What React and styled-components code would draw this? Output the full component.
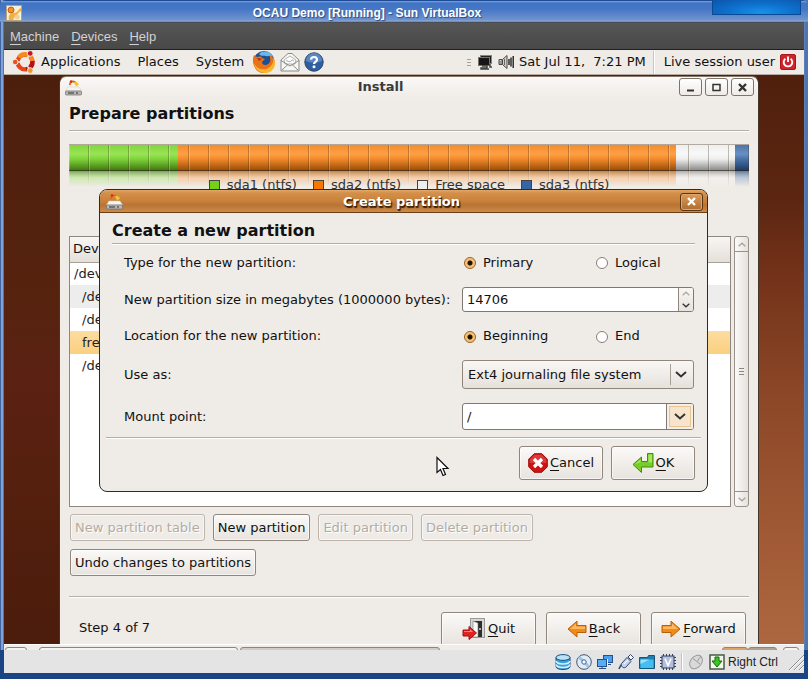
import React from 'react';
import styled, { createGlobalStyle, css } from 'styled-components';

const Global = createGlobalStyle`
  *, *::before, *::after { box-sizing: border-box; }
  body { margin: 0; background: #1b4484; }
  body, button, input, select { font: 13px/16px "DejaVu Sans", sans-serif; color: #111; }
  u { text-decoration: underline; text-decoration-thickness: 1px; text-underline-offset: 3px; }
`;

/* ---------- host window ---------- */

const HostWindow = styled.div`
  position: relative;
  min-height: 100vh;
  display: flex;
  flex-direction: column;
  padding: 0 4px;
  background: linear-gradient(90deg, #41659f 0, #41659f 1px, #7fa2da 1px, #7fa2da 3px, #55779f 3px, #55779f 4px, #5b80ba 4px, #5b80ba calc(100% - 3px), #5274ac calc(100% - 3px));
`;

const HostTitle = styled.header`
  height: 22px;
  margin: 0 -4px;
  padding: 4px 6px 0;
  display: grid;
  grid-template-columns: 72px 1fr 146px;
  align-items: center;
  background: linear-gradient(#1d4b96 0, #1d4b96 1px, #7ea3df 1px, #4274c4 3px, #4577c6 9px, #6f93ce 20px, #8fabdb 21px, #56749f 22px);
  border-radius: 6px 6px 0 0;
`;

const HostName = styled.h1`
  margin: 0;
  font: bold 12px/16px "Liberation Sans", sans-serif;
  color: #fff;
  text-align: center;
  white-space: nowrap;
  text-shadow: 1px 1px 1px #2a4a80;
`;

const CornerGlow = styled.div`
  position: absolute;
  top: 0;
  right: 7px;
  width: 89px;
  height: 15px;
  background: radial-gradient(ellipse at 55% 90%, #1893ea 0, #0e72cf 45%, #0b55ab 100%);
  border: solid #0a4a94;
  border-width: 0 1px 1px;
`;

const HostMenu = styled.nav`
  height: 28px;
  padding: 2px 6px 0;
  display: flex;
  gap: 12px;
  align-items: center;
  background: linear-gradient(#3f4650 0, #565656 1px, #484848 27px, #202020 27px);
  a {
    font: 13px/16px "Liberation Sans", sans-serif;
    color: #d2d2d2;
    text-decoration: none;
  }
`;

const StatusBar = styled.footer`
  height: 29px;
  margin: 0 -4px;
  padding: 0 4px;
  background: #1b4484;
`;

const StatusTray = styled.div`
  height: 23px;
  display: flex;
  align-items: center;
  justify-content: flex-end;
  gap: 5px;
  background: #e4e4e4;
  svg { flex: none; }
`;

const TrayDivider = styled.span`
  width: 2px;
  height: 18px;
  border-left: 1px solid #c4c4c4;
  border-right: 1px solid #fff;
`;

const HostKey = styled.span`
  display: flex;
  align-items: center;
  gap: 3px;
  padding-right: 5px;
  font: 12px/16px "Liberation Sans", sans-serif;
  color: #222;
`;

/* ---------- guest panels ---------- */

const Panel = styled.div`
  height: 25px;
  padding: 0 8px;
  display: flex;
  align-items: center;
  background: #efebe7;
  border-bottom: 1px solid #b7aca3;
  white-space: pre;
`;

const PanelMenus = styled.nav`
  display: flex;
  align-items: center;
  gap: 17px;
  margin: 0 8px 0 5px;
  a { color: #111; text-decoration: none; }
`;

const Launchers = styled.div`
  display: flex;
  align-items: center;
  gap: 4px;
`;

const PlainButton = styled.button`
  padding: 0;
  border: 0;
  background: none;
  display: flex;
`;

const Indicators = styled.div`
  margin-left: auto;
  display: flex;
  align-items: center;
  gap: 5px;
`;

const PanelDivider = styled.span`
  width: 2px;
  height: 23px;
  margin: 0 4px 0 2px;
  border-left: 1px solid #cdc6bf;
  border-right: 1px solid #fff;
`;

const BottomPanel = styled.div`
  height: 6px;
  padding: 2px 5px 0 1px;
  display: flex;
  overflow: hidden;
  background: #f0ece8;
  border-top: 1px solid #fff;
`;

const TaskEdge = styled.span`
  flex: 0 1 ${p => p.$w}px;
  height: 10px;
  margin-right: ${p => p.$gap || 0}px;
  border: 1px solid #8d857c;
  border-radius: 3px;
  background: ${p => p.$fill || '#f6f4f2'};
`;

const Spacer = styled.span`
  flex: 1;
`;

const Desktop = styled.main`
  flex: 1;
  display: flex;
  padding: 1px 45px 0 55px;
  background:
    linear-gradient(#50200d 0, #5b2611 22%, #6f2f17 32%, #8a4626 55%, #9c5531 75%, #ad6740 100%) right / 50% 100% no-repeat,
    linear-gradient(#4c1f0d 0, #56230f 40%, #5b2113 54%, #55200e 72%, #4b1c0c 100%);
`;

/* ---------- installer window ---------- */

const Installer = styled.section`
  position: relative;
  flex: 1;
  display: flex;
  flex-direction: column;
  background: linear-gradient(#fbfaf9 0, #f3f0ed 12px, #efebe7 26px);
  border: 1px solid #46352c;
  border-color: #8b7768 #46352c #46352c #46352c;
  border-bottom: 0;
  border-radius: 7px 7px 0 0;
`;

const WindowBar = styled.header`
  height: 20px;
  padding: 0 4px 0 5px;
  display: flex;
  align-items: center;
  gap: 3px;
`;

const WindowTitle = styled.h2`
  flex: 1;
  margin: 0;
  font-size: 13px;
  line-height: 16px;
  text-align: center;
  color: #3a3a3a;
`;

const WindowButton = styled.button`
  width: 23px;
  height: 18px;
  padding: 0;
  display: grid;
  place-items: center;
  border: 1px solid #7c756e;
  border-radius: 3px;
  background: linear-gradient(#fff, #efebe7);
`;

const Heading = styled.h3`
  margin: 0;
  font-size: 16px;
  line-height: 20px;
`;

const Rule = styled.hr`
  width: auto;
  height: 2px;
  margin: ${p => p.$m || '0'};
  border: 0;
  border-top: 1px solid #b5aea8;
  border-bottom: 1px solid #fff;
`;

const Page = styled.div`
  flex: 1;
  display: flex;
  flex-direction: column;
  padding: 7px 9px 0;
`;

const DiskBar = styled.div`
  position: relative;
  display: flex;
  height: 42px;
  margin-top: 12px;
  &::after {
    content: '';
    position: absolute;
    inset: 0;
    background:
      linear-gradient(transparent 0, transparent 25px, rgba(40, 30, 20, .55) 25px, rgba(40, 30, 20, .55) 26px, rgba(239, 235, 231, .35) 26px, #efebe7 42px),
      repeating-linear-gradient(90deg, rgba(255, 255, 255, .25) 0, rgba(255, 255, 255, .25) 1px, transparent 1px, transparent 19px, rgba(60, 40, 20, .3) 19px, rgba(60, 40, 20, .3) 20px);
    border-top: 1px solid rgba(70, 50, 30, .35);
  }
`;

const Segment = styled.span`
  flex: ${p => p.$size} 1 0;
  background: linear-gradient(${p => p.$stops[0]} 0, ${p => p.$stops[1]} 10px, ${p => p.$stops[0]} 15px, ${p => p.$stops[2]} 26px, ${p => p.$stops[2]} 27px, ${p => p.$stops[1]} 34px);
`;

const Legend = styled.ul`
  display: flex;
  justify-content: center;
  gap: 16px;
  height: 16px;
  margin: -9px 0 0;
  padding: 0;
  list-style: none;
  white-space: nowrap;
  li { position: relative; z-index: 1; display: flex; align-items: center; gap: 7px; color: #333; }
`;

const Swatch = styled.span`
  width: 11px;
  height: 11px;
  border: 1px solid #444;
  background: ${p => p.$color};
`;

const ListArea = styled.div`
  flex: 1;
  display: flex;
  gap: 3px;
  min-height: 271px;
  margin-top: 43px;
`;

const ListFrame = styled.div`
  flex: 1;
  border: 1px solid #8f877f;
  background: #fff;
`;

const PartitionTable = styled.table`
  width: 100%;
  border-collapse: collapse;
  text-align: left;
  th {
    height: 25px;
    padding: 0 3px;
    font-weight: normal;
    background: linear-gradient(#f8f6f4, #e4dfd9);
    border-bottom: 1px solid #a9a199;
  }
`;

const PartitionRow = styled.tr`
  background: ${p => p.$bg || '#fff'};
  td { height: 23px; padding: 0 0 0 ${p => (p.$child ? 12 : 4)}px; color: #222; }
`;

const Scroll = styled.div`
  width: 15px;
  display: flex;
  flex-direction: column;
  border: 1px solid #9a928a;
  border-radius: 3px;
  background: linear-gradient(90deg, #fbfaf9, #e6e1dc);
`;

const ScrollButton = styled.button`
  height: 14px;
  padding: 0;
  display: grid;
  place-items: center;
  border: 0;
  background: none;
`;

const ScrollThumb = styled.div`
  flex: 1;
  display: grid;
  place-items: center;
  border: solid #9a928a;
  border-width: 1px 0;
`;

const ButtonRow = styled.div`
  display: flex;
  gap: 8px;
  margin: ${p => p.$m || '0'};
  justify-content: ${p => p.$align || 'flex-start'};
`;

const Button = styled.button`
  height: ${p => p.$h || 27}px;
  ${p => p.$w && css`width: ${p.$w}px;`}
  padding: 0 4px;
  display: flex;
  align-items: center;
  justify-content: center;
  gap: 2px;
  border: 1px solid #8f877e;
  border-radius: 3px;
  background: linear-gradient(#fbfaf9, #f1eeea 50%, #e8e3de);
  box-shadow: inset 0 0 0 1px rgba(255, 255, 255, .6);
  white-space: nowrap;
  &:disabled {
    color: #b3aba3;
    border-color: #bdb5ad;
    background: #efebe7;
    text-shadow: 1px 1px 0 #fff;
  }
`;

const Steps = styled.footer`
  display: flex;
  align-items: flex-start;
  gap: 10px;
  padding: 14px 3px 0 10px;
  height: 46px;
  overflow: hidden;
  p { flex: 1; margin: 8px 0 0; }
`;

/* ---------- partition dialog ---------- */

const Dialog = styled.form`
  position: absolute;
  z-index: 2;
  top: 112px;
  left: 39px;
  right: 50px;
  border: 1px solid #2e2a27;
  border-radius: 8px;
  background: #efebe7;
  overflow: hidden;
`;

const DialogBar = styled.header`
  height: 23px;
  padding: 0 4px 0 6px;
  display: flex;
  align-items: center;
  background: linear-gradient(#e3a767 0, #d4904a 3px, #c8813c 11px, #b87433 15px, #cd8a48 22px, #6b4019 22px);
`;

const DialogTitle = styled(WindowTitle)`
  color: #fff;
  text-shadow: 1px 1px 1px #3c2208, 1px 2px 1px #3c2208;
`;

const DialogClose = styled(WindowButton)`
  border-color: #5b3512;
  background: linear-gradient(#d99c5c, #b06c2c);
  box-shadow: inset 0 0 0 1px #dba871;
`;

const DialogBody = styled.div`
  padding: 8px 12px 0;
`;

const Fields = styled.div`
  display: grid;
  grid-template-columns: 1fr 232px;
  grid-template-rows: 25px 25px 24px 29px 31px;
  row-gap: 12px;
  align-items: center;
  padding: 5px 1px 5px 12px;
`;

const RadioGroup = styled.div`
  display: grid;
  grid-template-columns: 132px 1fr;
  padding-left: 2px;
  label { display: flex; align-items: center; gap: 7px; }
`;

const Radio = styled.input`
  appearance: none;
  width: 12px;
  height: 12px;
  margin: 1px 0 0;
  border: 1px solid #867e76;
  border-radius: 50%;
  background: #fff;
  &:checked {
    border-color: #96601f;
    background: radial-gradient(circle, #1e1208 0, #1e1208 2px, #f6b966 3px, #f9cf90 6px);
  }
`;

const Entry = styled.div`
  display: flex;
  height: ${p => p.$h}px;
  border: 1px solid #7f7770;
  border-radius: 3px;
  background: #fff;
  overflow: hidden;
  input {
    flex: 1;
    min-width: 0;
    padding: 0 4px;
    border: 0;
    outline: 0;
    background: none;
    appearance: textfield;
  }
`;

const Spin = styled.div`
  width: 15px;
  display: flex;
  flex-direction: column;
  border-left: 1px solid #8f877e;
  background: linear-gradient(#f8f6f4, #e8e3de);
  button { flex: 1; width: 100%; padding: 0; border: 0; background: none; display: grid; place-items: center; }
`;

const ComboArrow = styled.button`
  width: 27px;
  padding: 0;
  display: grid;
  place-items: center;
  border: 0;
  border-left: 1px solid #7f7770;
  background: #f6e4cd;
  box-shadow: inset 0 0 0 2px #f4efe9, inset 0 0 0 3px #e9c391;
`;

const SelectBox = styled.div`
  display: grid;
  grid-template-columns: 1fr 23px;
  align-items: center;
  height: 29px;
  border: 1px solid #8f877e;
  border-radius: 3px;
  background: linear-gradient(#f9f7f5, #f0ece8 50%, #e5e0da);
  select {
    grid-area: 1 / 1 / 2 / 3;
    appearance: none;
    height: 27px;
    padding: 0 26px 0 5px;
    border: 0;
    outline: 0;
    background: none;
  }
`;

const SelectArrow = styled.span`
  grid-area: 1 / 2 / 2 / 3;
  height: 21px;
  display: grid;
  place-items: center;
  padding-right: 2px;
  border-left: 1px solid #a79f96;
  pointer-events: none;
`;

const Pointer = styled.svg`
  position: absolute;
  z-index: 3;
  left: 376px;
  top: 379px;
`;

/* ---------- drawings ---------- */

const Svg = ({ s = 16, w = s, h = s, vb = `0 0 ${w} ${h}`, children }) => (
  <svg width={w} height={h} viewBox={vb} fill="none" aria-hidden="true">{children}</svg>
);

const Chevron = ({ up, w = 9, h = 5, color = '#333' }) => (
  <Svg w={w} h={h} vb="0 0 12 7">
    <path d={up ? 'M1 6 6 1.5 11 6' : 'M1 1 6 5.5 11 1'} stroke={color} strokeWidth="2" />
  </Svg>
);

const HostIcon = () => (
  <Svg s={16}>
    <rect x=".5" y=".5" width="15" height="15" fill="#f8eedc" stroke="#b7a27e" />
    <path d="M3 15C2 10 4 8 8 8s4-4 7-5v3c-3 1-3 4-6 6-2 1-2 2-1 3z" fill="#f0b23c" />
    <circle cx="5" cy="5" r="3" fill="#f28d2b" stroke="#ba611d" />
    <circle cx="11" cy="12" r="2.5" fill="#e9d19b" />
  </Svg>
);

const UbuntuLogo = () => (
  <Svg s={24} vb="0 0 24 24">
    <circle cx="13" cy="12" r="7.4" stroke="#e8441c" strokeWidth="4.4" />
    <path d="M7 7.4A7.4 7.4 0 0 1 20.4 11" stroke="#f58a1f" strokeWidth="4.4" />
    <path d="M20.4 11A7.4 7.4 0 0 1 14 19.4" stroke="#b5121b" strokeWidth="4.4" />
    <path d="m8.3 12-7 0M15.5 8l3-5.5M15.5 16l3 6" stroke="#efebe7" strokeWidth="1.6" />
    <circle cx="3.2" cy="12" r="2.8" fill="#e8541c" stroke="#efebe7" />
    <circle cx="18.2" cy="3.4" r="2.9" fill="#c21924" stroke="#efebe7" />
    <circle cx="18.2" cy="20.6" r="2.9" fill="#f2962c" stroke="#efebe7" />
  </Svg>
);

const Firefox = () => (
  <Svg s={24} vb="0 0 24 24">
    <circle cx="12" cy="11.5" r="10.5" fill="#1d4f93" />
    <path d="M7 4c4-4 12-3 14 3-3-2-5 0-7-1-3-1-4 1-7-2z" fill="#6db7e6" />
    <path d="M2 5c1 1 2 2 4 2 3-1 4 0 4 1l3 1-3 3c0 4 6 4 8 0 1-4-1-6 0-7 5 3 6 10 2 14-5 6-14 5-17-1C1 14 0 9 2 5z" fill="#e8711a" />
    <path d="M2 13c3 7 11 8 16 4 3-3 4-7 3-10 4 5 2 12-3 15C11 25 3 21 2 13z" fill="#f9b62c" />
    <path d="M5 8c2 0 4 0 5 1l-3 2z" fill="#b5380d" />
  </Svg>
);

const Mail = () => (
  <Svg s={20} vb="0 0 20 20">
    <path d="M1 8 8 1.5h4L19 8v11H1z" fill="#f6f6f3" stroke="#8b8b86" />
    <path d="M4 8 10 4l6 4-1 4H5z" fill="#fff" stroke="#b5b5b0" />
    <path d="M1 8.5 10 14l9-5.5M1.5 18.5 8 12.5M18.5 18.5 12 12.5" stroke="#8b8b86" />
    <path d="M6 9c2-1 3 2 5 0s2 0 3 0" stroke="#999" />
  </Svg>
);

const Help = () => (
  <Svg s={20} vb="0 0 20 20">
    <circle cx="10" cy="10" r="9.2" fill="#2f5f9f" stroke="#27456f" />
    <path d="M2 9a8 8 0 0 1 16 0c-5 2-11 2-16 0z" fill="#5a87c2" />
    <path d="M7 7.6c.2-3.6 6-3.4 6 .1 0 2.1-3 2.2-3 4.4" stroke="#fff" strokeWidth="2.2" />
    <circle cx="10" cy="14.8" r="1.5" fill="#fff" />
  </Svg>
);

const Handle = () => (
  <Svg w={5} h={9}><path d="M0 1.5h4M0 4.5h4M0 7.5h4" stroke="#aaa29a" /></Svg>
);

const Network = () => (
  <Svg s={16}>
    <rect x="3.5" y="1.5" width="11" height="8" fill="#222" stroke="#88847f" />
    <rect x="1.5" y="3.5" width="11" height="8" fill="#161616" stroke="#77736e" />
    <path d="M5 12h5v2H4v1h8M13 10v3h2" stroke="#444" strokeWidth="1.5" />
  </Svg>
);

const Speaker = () => (
  <Svg s={16}>
    <path d="M1 5.5h3v5H1zM4.5 5.5 9 1.500v13L4.500 10.500z" fill="#d2d0cd" stroke="#4b4b4b" />
    <path d="M2 7v3M6.500 5v6" stroke="#666" />
    <path d="M11 5v6M13 3.500v9M15.200 2v12" stroke="#222" strokeWidth="1.400" />
  </Svg>
);

const Power = () => (
  <Svg s={16}>
    <rect x=".5" y=".5" width="15" height="15" rx="1.500" fill="#d2232b" stroke="#a8151c" />
    <path d="M5.400 4.700a4.300 4.300 0 1 0 5.200 0" stroke="#fff" strokeWidth="1.900" />
    <path d="M8 2.500v5.500" stroke="#fff" strokeWidth="1.900" />
  </Svg>
);

const Disk = () => (
  <Svg s={17} vb="0 0 17 17">
    <path d="M5 6a3 3 0 0 1 6-1" stroke="#e4661e" strokeWidth="2" />
    <path d="M9 3.500c2-2 4 0 5 2l-3 2z" fill="#f4c430" />
    <circle cx="6" cy="2.500" r="1.200" fill="#cf2a1a" />
    <path d="M3 8h11l2.500 4H.5z" fill="#f5f4f2" stroke="#d2cfca" strokeWidth=".5" />
    <rect x=".5" y="12" width="16" height="4" rx="1" fill="#b9b7b4" stroke="#6e6b68" strokeWidth=".7" />
    <path d="M3 14h6M11 14h2" stroke="#333" />
  </Svg>
);

const CancelIcon = () => (
  <Svg s={20} vb="0 0 20 20">
    <path d="M6.200.7h7.600l5.500 5.500v7.600l-5.500 5.500H6.200L.7 13.800V6.200z" fill="#cc1414" stroke="#a00a0a" />
    <path d="M6.500 1.700h7l4.800 4.800V10H1.700V6.500z" fill="#e04a4a" opacity=".7" />
    <path d="m6 6 8 8M14 6l-8 8" stroke="#fff" strokeWidth="3.200" />
  </Svg>
);

const OkIcon = () => (
  <Svg w={22} h={22}>
    <path d="M15.500 1.500h5.500V15H9.500v5.500L1 12.500l8.500-7.500v4.500h6z" fill="#76cc28" stroke="#3f8c0e" strokeLinejoin="round" />
    <path d="M16.500 2.500h3.500V10.500h-11l-1.500 0-5 2 6-5v3h8z" fill="#a8e66a" />
  </Svg>
);

const QuitIcon = () => (
  <Svg w={24} h={22}>
    <rect x="8.500" y=".5" width="14" height="19" fill="#d6d6d3" stroke="#9a9a97" />
    <path d="M11 3h9v16h-9z" fill="#2d2d2d" />
    <path d="M11 3 16 5v14h-5z" fill="#fafafa" stroke="#777" strokeWidth=".6" />
    <circle cx="18" cy="11" r="1" fill="#ddd" />
    <path d="M1 12h6V8.500l7.500 6.500L7 21.500V18H1z" fill="#e22222" stroke="#a30d0d" />
    <path d="M2 13h6v-2l3 3H2z" fill="#f58080" />
  </Svg>
);

const ArrowIcon = ({ flip }) => (
  <Svg w={20} h={18}>
    <g transform={flip ? 'matrix(-1 0 0 1 20 0)' : undefined}>
      <path d="M1 5.500h9V1.200L19 9l-9 8v-4.500H1z" fill="#f58a12" stroke="#b5610a" strokeLinejoin="round" />
      <path d="M2 6.500h9V3.400L17 9H2z" fill="#fbb867" />
    </g>
  </Svg>
);

const TrayDisk = () => (
  <Svg s={16}>
    <path d="M1 3.500v9c0 4 14 4 14 0v-9z" fill="#38a3dc" stroke="#1c4f7c" />
    <ellipse cx="8" cy="3.500" rx="7" ry="2.900" fill="#b9e4f7" stroke="#1c4f7c" />
    <path d="M1 7c1 4 13 4 14 0M1 10.500c1 4 13 4 14 0" stroke="#d8f2fc" strokeWidth="1.500" />
  </Svg>
);

const TrayCd = () => (
  <Svg s={16}>
    <circle cx="8" cy="8" r="7.300" fill="#e2ecf6" stroke="#44566f" />
    <path d="M8 8 3 3M8 8l5 5" stroke="#9cc4ea" strokeWidth="3" />
    <circle cx="8" cy="8" r="2.200" fill="#fff" stroke="#3f6290" />
  </Svg>
);

const TrayNet = () => (
  <Svg s={16}>
    <rect x="6.500" y="1.500" width="9" height="7" fill="#4aa0ee" stroke="#24508c" />
    <path d="M8 10.500h6" stroke="#24508c" />
    <rect x="1.500" y="5.500" width="9" height="7" fill="#78c0fa" stroke="#e8eef6" />
    <rect x=".5" y="5.500" width="9" height="7" fill="#59abf2" stroke="#24508c" />
    <path d="M2 14.500h7M5 13v2" stroke="#24508c" />
  </Svg>
);

const TrayUsb = () => (
  <Svg s={16}>
    <path d="M1 15c1-2 1-3 3-5" stroke="#32435e" strokeWidth="1.500" />
    <path d="M3.500 9.500 9 3.500l4 4-5.500 6c-2 1-5-1-4-4z" fill="#c7d2ec" stroke="#33466e" />
    <path d="m10 3 2.500-2.500 3 3L13 6z" fill="#f6f8fc" stroke="#33466e" />
    <path d="m6 10 4-4" stroke="#fff" />
  </Svg>
);

const TrayFolder = () => (
  <Svg s={16}>
    <path d="M.5 14.500v-11h8l1-2h6v13z" fill="#1d7fb4" stroke="#16567e" />
    <path d="M1.500 14V5.500h13V14z" fill="#45bdf0" />
    <path d="M1.500 10V5.500h9z" fill="#9ae2fb" />
  </Svg>
);

const TrayChip = () => (
  <Svg s={16}>
    <path d="M3.500 0v16M6.500 0v16M9.500 0v16M12.500 0v16M0 3.500h16M0 6.500h16M0 9.500h16M0 12.500h16" stroke="#33425f" />
    <rect x="2" y="2" width="12" height="12" fill="#b4bfe0" stroke="#33425f" />
    <path d="m5 4.500 3 7 3-7" stroke="#fff" strokeWidth="1.600" />
  </Svg>
);

const TrayMouse = () => (
  <Svg s={16}>
    <ellipse cx="8" cy="8" rx="5.500" ry="7.500" transform="rotate(40 8 8)" fill="#d9d9d9" stroke="#9b9b9b" />
    <path d="M5 4.500 12 10M9.500 7 13 2" stroke="#9b9b9b" />
  </Svg>
);

const TrayKey = () => (
  <Svg s={16}>
    <rect x="1" y="1" width="14" height="14" fill="#f4f6ee" stroke="#4c5a44" strokeWidth="1.500" />
    <path d="M6 3h4v4h3l-5 6-5-6h3z" fill="#37c71e" stroke="#14680a" />
  </Svg>
);

const Grip = () => (
  <Svg w={16} h={17}>
    <path d="M1 17 16 2M6 17 16 7M11 17l5-5" stroke="#8d8d8d" />
    <path d="M2 17 16 3M7 17l9-9M12 17l4-4" stroke="#fff" />
  </Svg>
);

const CloseGlyph = ({ color }) => (
  <Svg s={9}><path d="m1 1 7 7M8 1 1 8" stroke={color} strokeWidth="2.400" /></Svg>
);

/* ---------- data ---------- */

const segments = [
  { size: 109, stops: ['#7fd43a', '#98e455', '#417a12'] },
  { size: 498, stops: ['#f28a2a', '#ff9f45', '#9a4f08'] },
  { size: 59, stops: ['#eeeeee', '#f8f8f8', '#8c8c8c'] },
  { size: 14, stops: ['#4a72a8', '#6790c2', '#1f3d66'] },
];

const legend = [
  ['#73d216', 'sda1 (ntfs)'],
  ['#f57900', 'sda2 (ntfs)'],
  ['#eeeeee', 'Free space'],
  ['#3465a4', 'sda3 (ntfs)'],
];

const partitions = [
  { name: '/dev/sda' },
  { name: '/dev/sda1', child: true, bg: '#ededee' },
  { name: '/dev/sda2', child: true },
  { name: 'free space', child: true, bg: 'linear-gradient(#fddc9f, #fad081)' },
  { name: '/dev/sda3', child: true },
];

function CreatePartition() {
  return (
    <Dialog role="dialog" aria-labelledby="dialog-title" onSubmit={e => e.preventDefault()}>
      <DialogBar>
        <Disk />
        <DialogTitle id="dialog-title">Create partition</DialogTitle>
        <DialogClose type="button" aria-label="Close dialog"><CloseGlyph color="#fff" /></DialogClose>
      </DialogBar>
      <DialogBody>
        <Heading>Create a new partition</Heading>
        <Rule $m="2px 0 0" />
        <Fields>
          <span id="type-label">Type for the new partition:</span>
          <RadioGroup role="radiogroup" aria-labelledby="type-label">
            <label><Radio type="radio" name="type" defaultChecked />Primary</label>
            <label><Radio type="radio" name="type" />Logical</label>
          </RadioGroup>
          <label htmlFor="size">New partition size in megabytes (1000000 bytes):</label>
          <Entry $h={25}>
            <input id="size" defaultValue="14706" inputMode="numeric" />
            <Spin>
              <button type="button" aria-label="Increase"><Chevron up w={8} color="#b0a8a0" /></button>
              <button type="button" aria-label="Decrease"><Chevron w={8} /></button>
            </Spin>
          </Entry>
          <span id="location-label">Location for the new partition:</span>
          <RadioGroup role="radiogroup" aria-labelledby="location-label">
            <label><Radio type="radio" name="location" defaultChecked />Beginning</label>
            <label><Radio type="radio" name="location" />End</label>
          </RadioGroup>
          <label htmlFor="use-as">Use as:</label>
          <SelectBox>
            <select id="use-as"><option>Ext4 journaling file system</option></select>
            <SelectArrow><Chevron w={12} h={7} /></SelectArrow>
          </SelectBox>
          <label htmlFor="mount">Mount point:</label>
          <Entry $h={27}>
            <input id="mount" defaultValue="/" />
            <ComboArrow type="button" aria-label="Mount point choices"><Chevron w={12} h={7} /></ComboArrow>
          </Entry>
        </Fields>
        <Rule $m="0 -6px" />
        <ButtonRow $m="7px 0 11px" $align="flex-end">
          <Button type="button" $w={84} $h={34}><CancelIcon /><span><u>C</u>ancel</span></Button>
          <Button type="submit" $w={84} $h={34}><OkIcon /><span><u>O</u>K</span></Button>
        </ButtonRow>
      </DialogBody>
    </Dialog>
  );
}

export default function App() {
  return (
    <>
      <Global />
      <HostWindow>
        <HostTitle>
          <HostIcon />
          <HostName>OCAU Demo [Running] - Sun VirtualBox</HostName>
          <CornerGlow />
        </HostTitle>
        <HostMenu>
          <a href="#machine"><u>M</u>achine</a>
          <a href="#devices"><u>D</u>evices</a>
          <a href="#help"><u>H</u>elp</a>
        </HostMenu>
        <Panel>
          <UbuntuLogo />
          <PanelMenus>
            <a href="#applications">Applications</a>
            <a href="#places">Places</a>
            <a href="#system">System</a>
          </PanelMenus>
          <Launchers>
            <PlainButton aria-label="Firefox"><Firefox /></PlainButton>
            <PlainButton aria-label="Mail"><Mail /></PlainButton>
            <PlainButton aria-label="Help"><Help /></PlainButton>
          </Launchers>
          <Indicators>
            <Handle />
            <Network />
            <Speaker />
            <time>{'Sat Jul 11,  7:21 PM'}</time>
            <PanelDivider />
            <span>Live session user</span>
            <PlainButton aria-label="Power"><Power /></PlainButton>
          </Indicators>
        </Panel>
        <Desktop>
          <Installer>
            <WindowBar>
              <Disk />
              <WindowTitle>Install</WindowTitle>
              <WindowButton aria-label="Minimize"><Svg s={9}><path d="M1 7.500h7" stroke="#333" strokeWidth="2" /></Svg></WindowButton>
              <WindowButton aria-label="Maximize"><Svg s={9}><path d="M1 1.500h7v6H1z" stroke="#333" strokeWidth="1.500" /></Svg></WindowButton>
              <WindowButton aria-label="Close"><CloseGlyph color="#333" /></WindowButton>
            </WindowBar>
            <Page>
              <Heading>Prepare partitions</Heading>
              <Rule $m="6px 0 0" />
              <DiskBar>
                {segments.map((s, i) => <Segment key={i} $size={s.size} $stops={s.stops} />)}
              </DiskBar>
              <Legend>
                {legend.map(([color, text]) => <li key={text}><Swatch $color={color} />{text}</li>)}
              </Legend>
              <ListArea>
                <ListFrame>
                  <PartitionTable>
                    <thead><tr><th>Device</th></tr></thead>
                    <tbody>
                      {partitions.map(p => (
                        <PartitionRow key={p.name} $child={p.child} $bg={p.bg}><td>{p.name}</td></PartitionRow>
                      ))}
                    </tbody>
                  </PartitionTable>
                </ListFrame>
                <Scroll>
                  <ScrollButton aria-label="Scroll up"><Chevron up w={8} color="#aaa29a" /></ScrollButton>
                  <ScrollThumb><Svg w={5} h={9}><path d="M0 1.500h5M0 4.500h5M0 7.500h5" stroke="#8f877f" /></Svg></ScrollThumb>
                  <ScrollButton aria-label="Scroll down"><Chevron w={8} color="#aaa29a" /></ScrollButton>
                </Scroll>
              </ListArea>
              <ButtonRow $m="7px 1px 8px">
                <Button disabled>New partition table</Button>
                <Button>New partition</Button>
                <Button disabled>Edit partition</Button>
                <Button disabled>Delete partition</Button>
              </ButtonRow>
              <ButtonRow $m="0 1px 20px">
                <Button>Undo changes to partitions</Button>
              </ButtonRow>
              <Rule />
              <Steps>
                <p>Step 4 of 7</p>
                <Button $w={95} $h={34}><QuitIcon /><span><u>Q</u>uit</span></Button>
                <Button $w={95} $h={34}><ArrowIcon flip /><span><u>B</u>ack</span></Button>
                <Button $w={95} $h={34}><ArrowIcon /><span><u>F</u>orward</span></Button>
              </Steps>
            </Page>
            <CreatePartition />
            <Pointer width="14" height="21" viewBox="0 0 14 21" aria-hidden="true">
              <path d="M1 1.500v15l3.500-3 2.500 6 2.500-1-2.500-6h5z" fill="#fff" stroke="#111" strokeWidth="1.200" />
            </Pointer>
          </Installer>
        </Desktop>
        <BottomPanel>
          <TaskEdge $w={22} $gap={12} />
          <TaskEdge $w={199} $gap={2} />
          <TaskEdge $w={200} $fill="#d3cbc3" />
          <Spacer />
          <TaskEdge $w={26} $fill="#e2a264" />
          <TaskEdge $w={29} $gap={6} $fill="#b0a292" />
          <TaskEdge $w={16} />
        </BottomPanel>
        <StatusBar>
          <StatusTray>
            <TrayDisk /><TrayCd /><TrayNet /><TrayUsb /><TrayFolder /><TrayChip />
            <TrayDivider />
            <TrayMouse />
            <HostKey><TrayKey />Right Ctrl</HostKey>
            <Grip />
          </StatusTray>
        </StatusBar>
      </HostWindow>
    </>
  );
}
